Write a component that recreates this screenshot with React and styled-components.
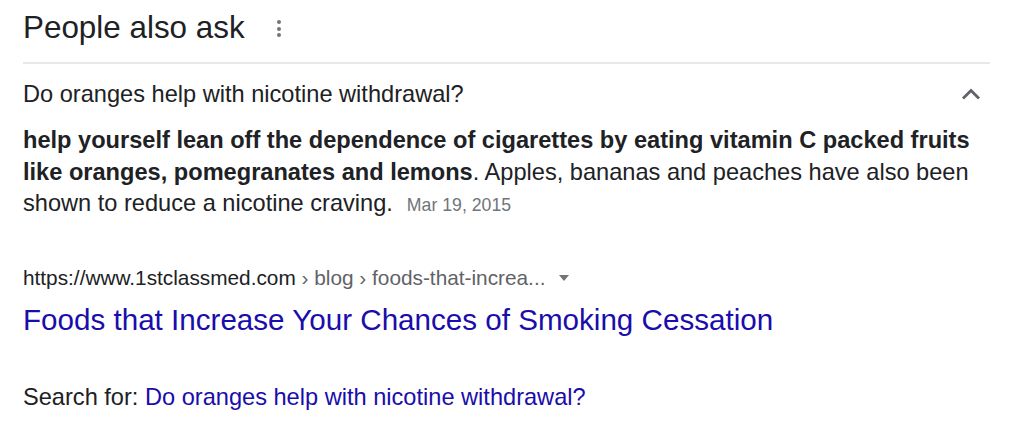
import React from 'react'
import styled, { createGlobalStyle } from 'styled-components'

const GlobalStyle = createGlobalStyle`
    body {
        margin: 0;
        background: #fff;
        font-family: "Liberation Sans", Arial, sans-serif;
        color: #202124;
    }
`

const Page = styled.div`
    width: 967px;
    padding: 10px 0 0 23px;
`

const Header = styled.div`
    display: flex;
    align-items: center;
    height: 36px;
    padding-bottom: 16px;
    border-bottom: 2px solid #e8e8ec;
`

const Heading = styled.h2`
    margin: 0;
    font-size: 31.4px;
    font-weight: 400;
    line-height: 36px;
    color: #202124;
`

const MoreButton = styled.span`
    display: flex;
    flex-direction: column;
    gap: 2.5px;
    margin-left: 32px;
    margin-top: 1px;

    & > i {
        width: 4px;
        height: 4px;
        border-radius: 50%;
        background: #70757a;
    }
`

const Question = styled.div`
    display: flex;
    align-items: center;
    justify-content: space-between;
    padding: 15px 9px 0 0;
    font-size: 23.6px;
    line-height: 30px;
`

const Snippet = styled.div`
    margin-top: 16px;
    font-size: 23.6px;
    line-height: 31.5px;
    color: #202124;

    & b {
        font-weight: 700;
    }
`

const DateText = styled.span`
    margin-left: 14px;
    font-size: 17.7px;
    color: #70757a;
`

const Cite = styled.div`
    display: flex;
    align-items: center;
    margin-top: 44px;
    font-size: 20.8px;
    line-height: 24px;
    color: #202124;
`

const Crumbs = styled.span`
    color: #5f6368;
`

const Caret = styled.span`
    margin-left: 14px;
    width: 0;
    height: 0;
    border-left: 5.5px solid transparent;
    border-right: 5.5px solid transparent;
    border-top: 6px solid #70757a;
`

const Title = styled.a`
    display: block;
    margin-top: 12px;
    font-size: 29.6px;
    line-height: 36px;
    color: #1a0dab;
    text-decoration: none;
`

const SearchFor = styled.div`
    margin-top: 45px;
    font-size: 23.6px;
    line-height: 28px;
    color: #202124;

    & > a {
        color: #1a0dab;
        text-decoration: none;
    }
`

function ChevronUp() {
    return (
        <svg width="20" height="12" viewBox="0 0 20 12">
            <path d="M2 10.5 L10 2.5 L18 10.5" fill="none" stroke="#5f6368" strokeWidth="2.8" />
        </svg>
    )
}

export default function App() {
    return (
        <Page>
            <GlobalStyle />
            <Header>
                <Heading>People also ask</Heading>
                <MoreButton><i /><i /><i /></MoreButton>
            </Header>

            <Question>
                <span>Do oranges help with nicotine withdrawal?</span>
                <ChevronUp />
            </Question>

            <Snippet>
                <b>help yourself lean off the dependence of cigarettes by eating vitamin C packed fruits like oranges, pomegranates and lemons</b>. Apples, bananas and peaches have also been shown to reduce a nicotine craving.
                <DateText>Mar 19, 2015</DateText>
            </Snippet>

            <Cite>
                https://www.1stclassmed.com<Crumbs>&nbsp;› blog › foods-that-increa...</Crumbs>
                <Caret />
            </Cite>
            <Title href="#">Foods that Increase Your Chances of Smoking Cessation</Title>

            <SearchFor>
                Search for: <a href="#">Do oranges help with nicotine withdrawal?</a>
            </SearchFor>
        </Page>
    )
}
